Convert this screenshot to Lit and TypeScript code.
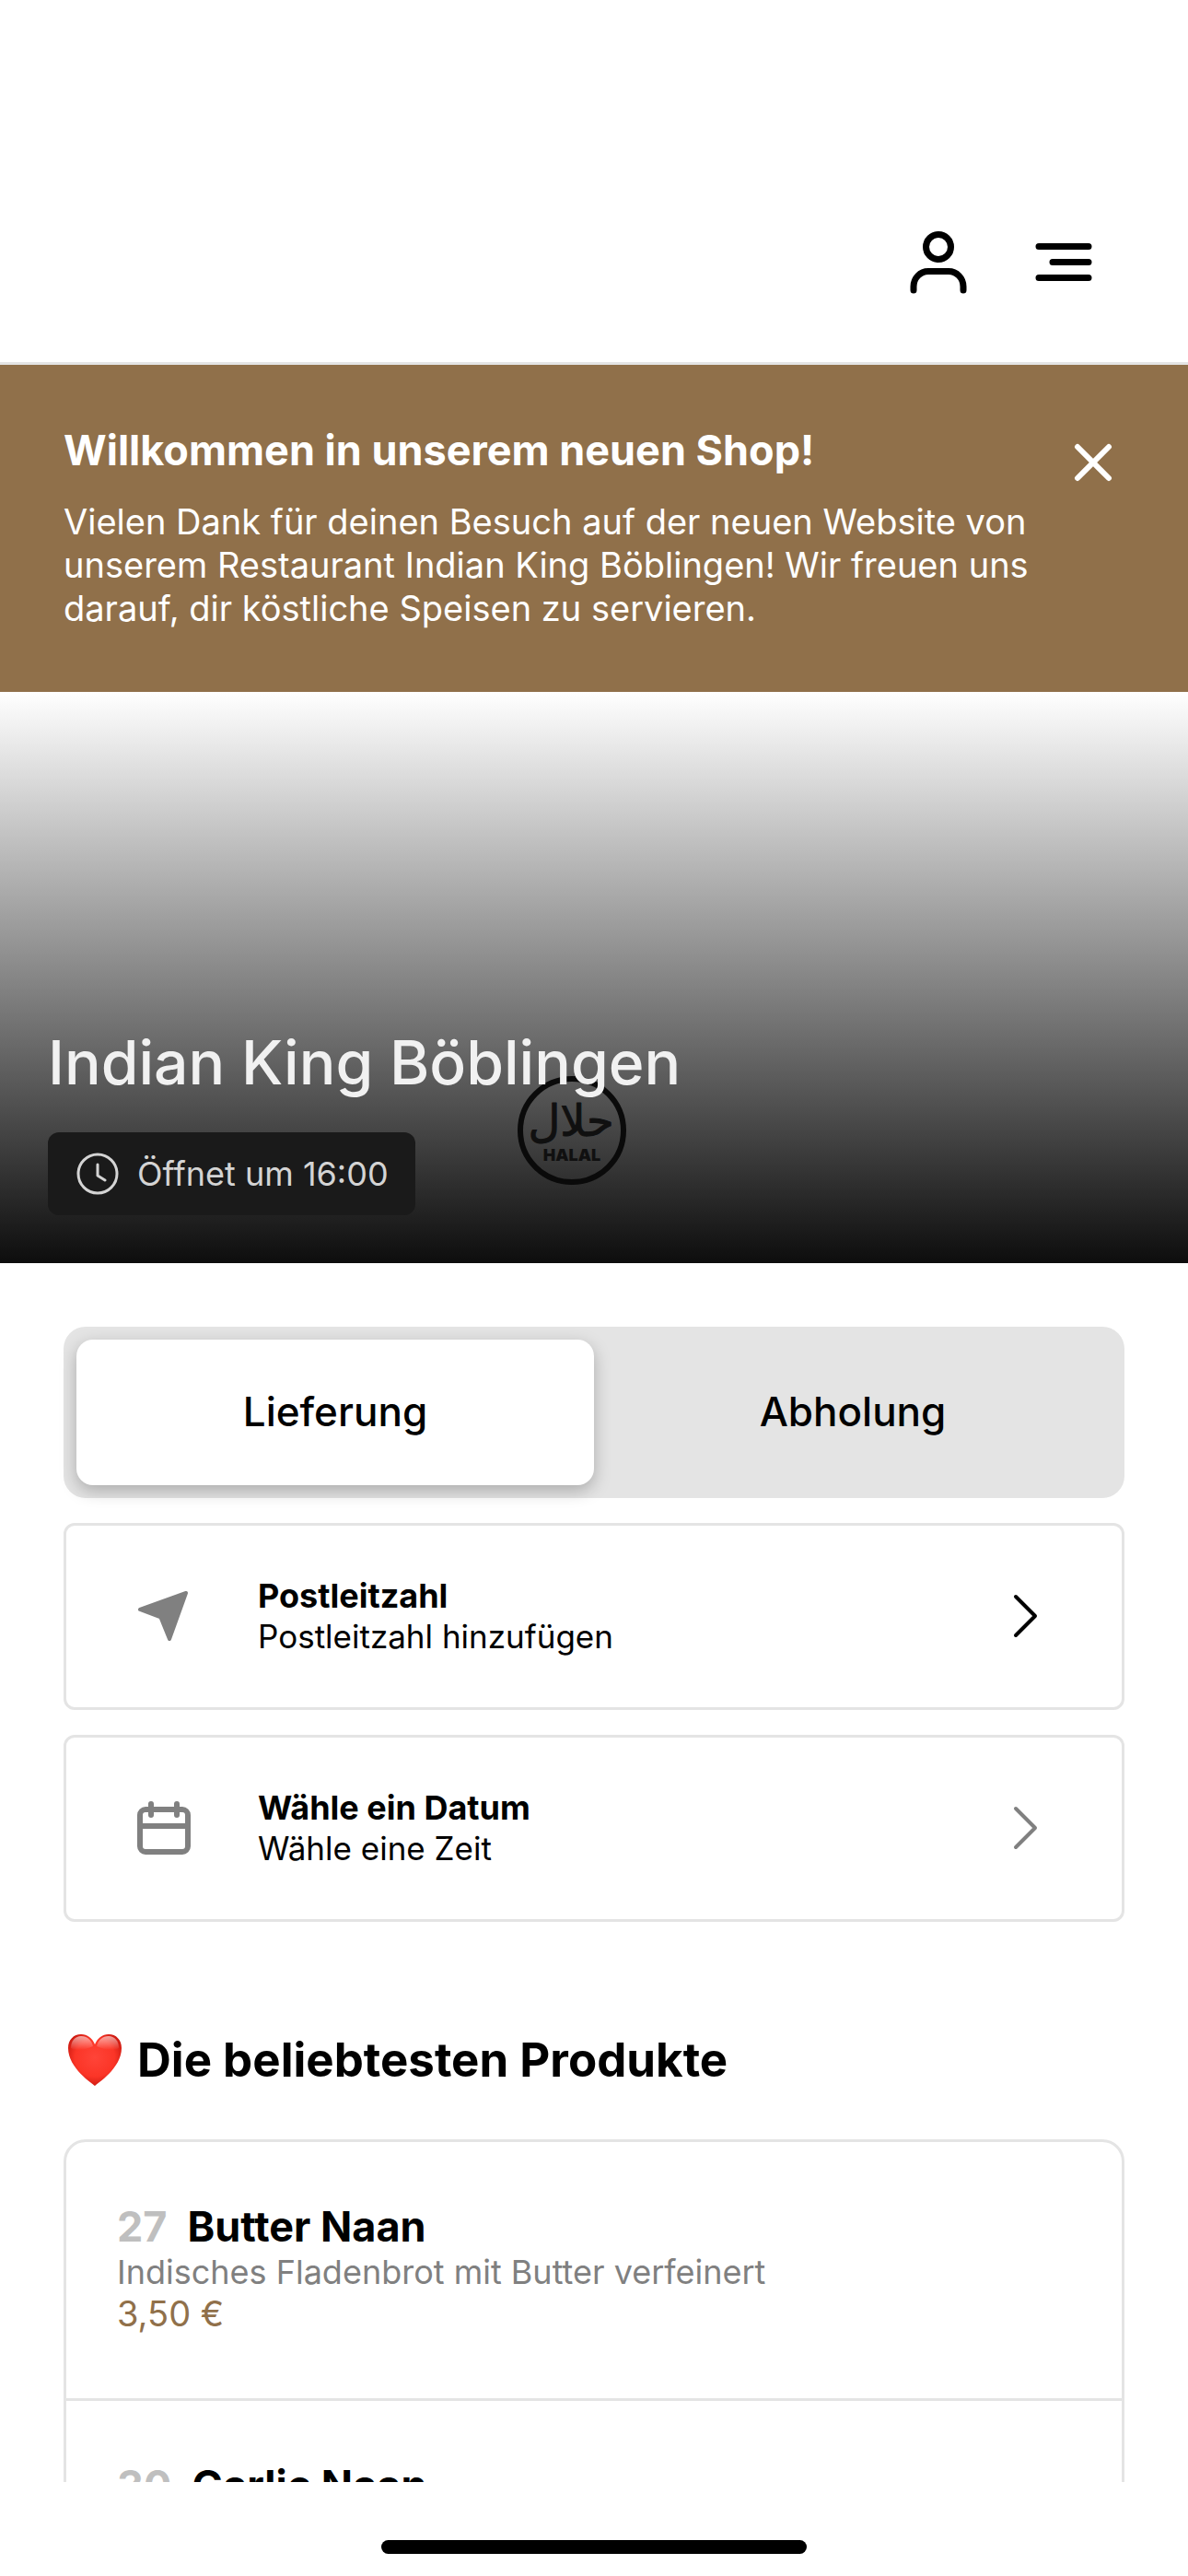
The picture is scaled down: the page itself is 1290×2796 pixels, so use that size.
import { LitElement, html, css, svg } from "lit";
import { customElement, state } from "lit/decorators.js";

interface Product {
  no: string;
  name: string;
  text?: string;
  price?: string;
}

const PRODUCTS: Product[] = [
  { no: "27", name: "Butter Naan", text: "Indisches Fladenbrot mit Butter verfeinert", price: "3,50 €" },
  { no: "30", name: "Garlic Naan" },
];

const chevron = html`<svg class="chevron" viewBox="0 0 32 54" aria-hidden="true">
  <path d="M4 6L25 27L4 48" />
</svg>`;

@customElement("app-root")
export class AppRoot extends LitElement {
  static styles = css`
    :host {
      display: flex;
      flex-direction: column;
      height: 100vh;
      overflow: hidden;
      background: #fff;
      color: #000;
      font-family: Inter, "Liberation Sans", sans-serif;
    }
    * {
      box-sizing: border-box;
    }
    h1, h2, h3, p {
      margin: 0;
    }
    button {
      font: inherit;
      color: inherit;
      background: none;
      border: 0;
      padding: 0;
      text-align: left;
      cursor: pointer;
    }
    svg {
      display: block;
      fill: none;
      stroke: currentColor;
      stroke-linecap: round;
      stroke-linejoin: round;
      flex: none;
    }
    .header {
      flex: none;
      display: flex;
      justify-content: flex-end;
      gap: 56px;
      padding: 244px 95px 69px 0;
      border-bottom: 3px solid #e4e4e4;
    }
    .header svg {
      width: 80px;
      height: 80px;
      stroke-width: 7;
    }
    .scroll {
      flex: 1;
      min-height: 0;
      overflow: hidden;
    }
    .notice {
      display: flex;
      justify-content: space-between;
      align-items: flex-start;
      padding: 65px 69px 67px;
      background: #90704a;
      color: #fff;
    }
    .notice-title {
      font-size: 45px;
      line-height: 56px;
      font-weight: 700;
      margin-bottom: 26px;
    }
    .notice-text {
      max-width: 1070px;
      font-size: 38px;
      line-height: 47px;
    }
    .close {
      margin: 20px 13px 0 0;
    }
    .close svg {
      width: 42px;
      height: 42px;
      stroke-width: 6;
    }
    .hero {
      position: relative;
      display: flex;
      flex-direction: column;
      align-items: flex-start;
      justify-content: flex-end;
      gap: 34px;
      min-height: 620px;
      padding: 0 52px 52px;
      background: linear-gradient(#fff 0%, #0d0d0d 100%);
    }
    .halal {
      position: absolute;
      left: 562px;
      bottom: 85px;
      width: 118px;
      height: 118px;
    }
    .hero-title {
      position: relative;
      font-size: 66px;
      line-height: 84px;
      font-weight: 500;
      color: #f1f1f1;
    }
    .status {
      display: flex;
      align-items: center;
      gap: 20px;
      height: 90px;
      padding: 0 29px 0 31px;
      border-radius: 12px;
      background: #1a1a1a;
      color: #d4d4d4;
      font-size: 36px;
      line-height: 44px;
    }
    .status svg {
      width: 46px;
      height: 46px;
    }
    .main {
      display: flex;
      flex-direction: column;
      gap: 27px;
      padding: 69px 69px 0;
    }
    .toggle {
      display: grid;
      grid-template-columns: 1fr 1fr;
      padding: 14px;
      border-radius: 24px;
      background: #e4e4e4;
    }
    .toggle button {
      height: 158px;
      padding-bottom: 2px;
      border-radius: 18px;
      text-align: center;
      font-size: 44px;
      line-height: 56px;
      font-weight: 500;
    }
    .toggle .active {
      background: #fff;
      box-shadow: 0 6px 18px rgba(0, 0, 0, 0.25);
    }
    .option {
      display: flex;
      align-items: center;
      height: 203px;
      padding: 0 87px 2px 74px;
      border: 3px solid #e4e4e4;
      border-radius: 12px;
      font-size: 35px;
      line-height: 44px;
    }
    .option .lead {
      width: 64px;
      height: 64px;
      margin-right: 70px;
      color: #808080;
    }
    .option-text {
      flex: 1;
      display: flex;
      flex-direction: column;
    }
    .option-title {
      font-size: 36px;
      font-weight: 700;
    }
    .chevron {
      width: 32px;
      height: 54px;
      stroke-width: 4;
    }
    .muted .chevron {
      color: #808080;
    }
    .section-title {
      display: flex;
      align-items: center;
      gap: 16px;
      padding: 91px 0 27px;
      font-size: 51px;
      line-height: 64px;
      font-weight: 700;
    }
    .heart {
      width: 64px;
      height: 64px;
      stroke: none;
    }
    .products {
      border: 3px solid #e4e4e4;
      border-radius: 24px;
    }
    .product {
      display: flex;
      flex-direction: column;
      width: 100%;
      min-height: 281px;
      padding: 65px 55px 55px;
      border-bottom: 3px solid #e4e4e4;
    }
    .product-title {
      display: flex;
      gap: 22px;
      font-size: 45px;
      line-height: 54px;
      font-weight: 700;
    }
    .no {
      color: #bfbfbf;
    }
    .product-text {
      font-size: 36px;
      line-height: 44px;
      color: #808080;
    }
    .price {
      font-size: 38px;
      line-height: 47px;
      color: #90704a;
    }
    .home {
      flex: none;
      display: flex;
      justify-content: center;
      padding: 63px 0 24px;
      background: #fff;
    }
    .home span {
      width: 462px;
      height: 15px;
      border-radius: 8px;
      background: #000;
    }
  `;

  @state() private mode = "Lieferung";
  @state() private noticeOpen = true;

  private renderNotice() {
    return html`<section class="notice">
      <div>
        <h2 class="notice-title">Willkommen in unserem neuen Shop!</h2>
        <p class="notice-text">
          Vielen Dank für deinen Besuch auf der neuen Website von unserem Restaurant Indian King Böblingen! Wir freuen uns darauf, dir köstliche Speisen zu servieren.
        </p>
      </div>
      <button class="close" aria-label="Schließen" @click=${() => (this.noticeOpen = false)}>
        <svg viewBox="0 0 42 42"><path d="M4 4L38 38M38 4L4 38" /></svg>
      </button>
    </section>`;
  }

  private renderHalal() {
    return svg`<svg class="halal" viewBox="0 0 118 118" role="img" aria-label="Halal">
      <circle cx="59" cy="59" r="56" stroke="#0a0a0a" stroke-width="6" />
      <text x="58" y="65" text-anchor="middle" font-family="'DejaVu Sans', sans-serif" font-size="48" fill="#101010" stroke="#101010" stroke-width="1">حلال</text>
      <text x="59" y="92" text-anchor="middle" font-family="Inter, sans-serif" font-weight="900" font-size="18" fill="#101010" stroke="none">HALAL</text>
    </svg>`;
  }

  render() {
    return html`
      <header class="header">
        <button aria-label="Konto">
          <svg viewBox="0 0 80 80">
            <circle cx="40" cy="24" r="13.5" />
            <path d="M13 71V67C13 58 20 50.5 29 50.5H51C60 50.5 67 58 67 67V71" />
          </svg>
        </button>
        <button aria-label="Menü">
          <svg viewBox="0 0 80 80">
            <path d="M13 23.5H67M28 40.5H67M13 57.5H67" />
          </svg>
        </button>
      </header>
      <div class="scroll">
        ${this.noticeOpen ? this.renderNotice() : null}
        <section class="hero">
          ${this.renderHalal()}
          <h1 class="hero-title">Indian King Böblingen</h1>
          <div class="status">
            <svg viewBox="0 0 46 46" stroke-width="3">
              <circle cx="23" cy="23" r="21" />
              <path d="M23 13V25L31 30" />
            </svg>
            <span>Öffnet um 16:00</span>
          </div>
        </section>
        <main class="main">
          <div class="toggle">
            ${["Lieferung", "Abholung"].map(
              (m) => html`<button
                class=${m === this.mode ? "active" : ""}
                aria-pressed=${m === this.mode}
                @click=${() => (this.mode = m)}
              >${m}</button>`
            )}
          </div>
          <button class="option">
            <svg class="lead" viewBox="0 0 64 64">
              <path d="M6 25L56 7L38 57L28.5 33.5Z" fill="currentColor" stroke-width="4" />
            </svg>
            <span class="option-text"><span class="option-title">Postleitzahl</span><span>Postleitzahl hinzufügen</span></span>
            ${chevron}
          </button>
          <button class="option muted">
            <svg class="lead" viewBox="0 0 64 64" stroke-width="6">
              <rect x="6" y="12" width="52" height="46" rx="6" />
              <path d="M6 30H58M18 6V18M46 6V18" />
            </svg>
            <span class="option-text"><span class="option-title">Wähle ein Datum</span><span>Wähle eine Zeit</span></span>
            ${chevron}
          </button>
          <h2 class="section-title">
            <svg class="heart" viewBox="0 0 64 64" aria-hidden="true">
              <defs>
                <radialGradient id="heart-fill" cx="0.5" cy="0.45" r="0.62">
                  <stop offset="0" stop-color="#ff4438" />
                  <stop offset="0.6" stop-color="#fb3527" />
                  <stop offset="1" stop-color="#c01109" />
                </radialGradient>
                <linearGradient id="heart-shine" x1="0" y1="0" x2="0" y2="1">
                  <stop offset="0" stop-color="#fff" stop-opacity="0.6" />
                  <stop offset="1" stop-color="#fff" stop-opacity="0" />
                </linearGradient>
              </defs>
              <path d="M34 60C32 58 5 41 5 19C5 10 11 4 19 4C26 4 31 8 34 15C37 8 42 4 49 4C57 4 63 10 63 19C63 41 36 58 34 60Z" fill="url(#heart-fill)" />
              <path d="M8 19C8 11 13 6 19 6C26 6 30 10 32 17C25 20 15 23 8 19Z" fill="url(#heart-shine)" />
              <path d="M60 19C60 11 55 6 49 6C42 6 38 10 36 17C43 20 53 23 60 19Z" fill="url(#heart-shine)" />
            </svg>
            <span>Die beliebtesten Produkte</span>
          </h2>
          <div class="products">
            ${PRODUCTS.map(
              (p) => html`<button class="product">
                <h3 class="product-title"><span class="no">${p.no}</span><span>${p.name}</span></h3>
                ${p.text ? html`<p class="product-text">${p.text}</p>` : null}
                ${p.price ? html`<p class="price">${p.price}</p>` : null}
              </button>`
            )}
          </div>
        </main>
      </div>
      <div class="home"><span></span></div>
    `;
  }
}
